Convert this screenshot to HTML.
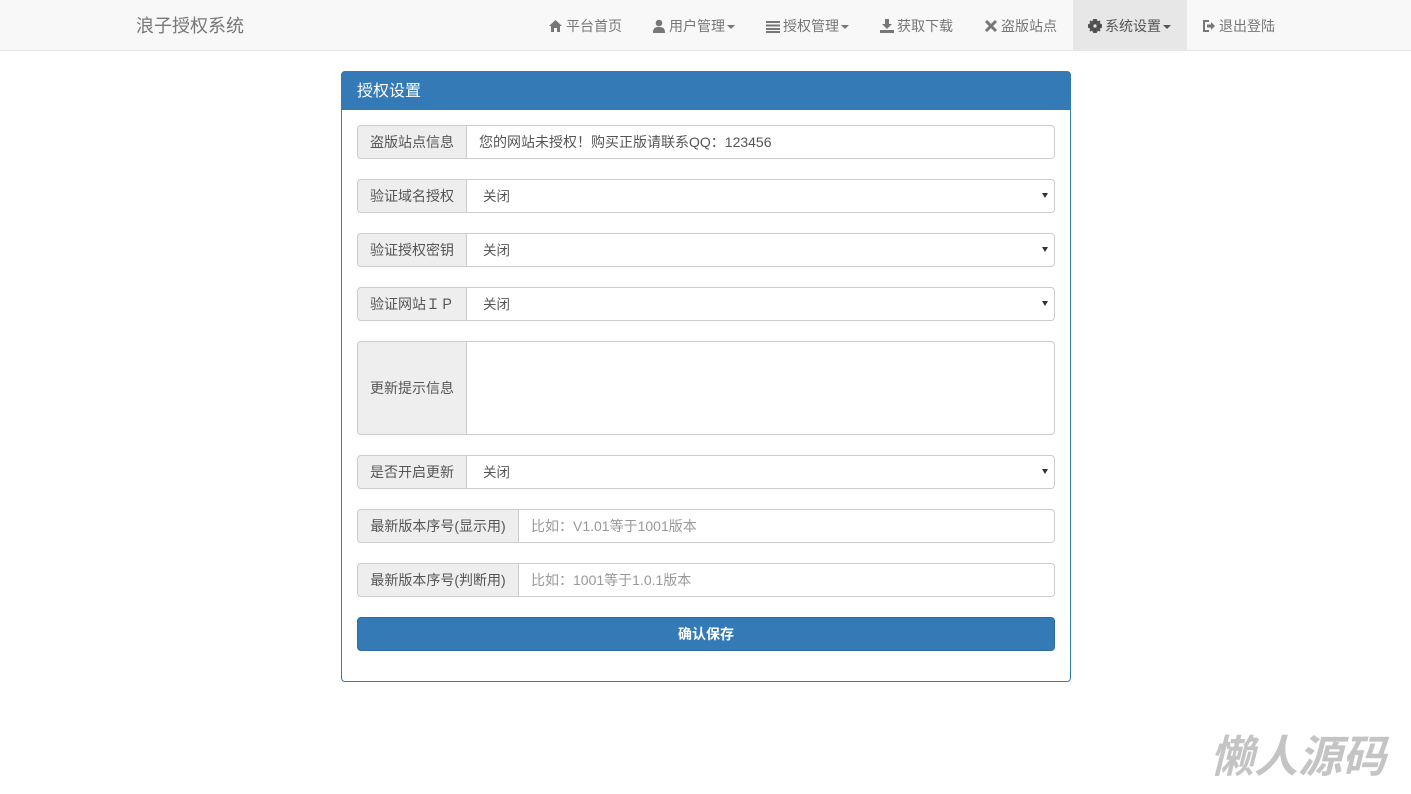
<!DOCTYPE html>
<html><head><meta charset="utf-8"><style>
*{box-sizing:border-box;margin:0;padding:0}
body{width:1411px;height:794px;background:#fff;font-family:"Liberation Sans","Noto Sans CJK SC",sans-serif;font-size:14px;color:#333;position:relative;overflow:hidden}
.nav{position:absolute;left:0;top:0;width:1411px;height:51px;background:#f8f8f8;border-bottom:1px solid #e7e7e7}
.brand{position:absolute;left:136px;top:15px;font-size:18px;color:#777;line-height:22px}
.li{position:absolute;top:0;height:50px;line-height:52px;color:#777;font-size:14px;white-space:nowrap;padding-left:15px}
.li.act{background:#e7e7e7}
.li svg{vertical-align:-2px;margin-right:3px}
.caret{display:inline-block;width:0;height:0;border-left:4px solid transparent;border-right:4px solid transparent;border-top:4px solid #777;vertical-align:middle;margin-left:2px}
.panel{position:absolute;left:341px;top:71px;width:730px;height:611px;border:1px solid #337ab7;border-radius:4px}
.ph{height:38px;background:#337ab7;color:#fff;font-size:16px;line-height:40px;padding-left:15px}
.g{position:absolute;left:15px;width:698px;height:34px;display:flex}
.ad{width:110px;background:#eee;border:1px solid #ccc;border-radius:4px 0 0 4px;color:#555;text-align:center;line-height:32px;font-size:14px;flex:none}
.in{flex:1;border:1px solid #ccc;border-left:none;border-radius:0 4px 4px 0;line-height:32px;padding-left:12px;color:#555;position:relative;font-size:14px}
.in.sel{padding-left:16px;font-size:13.5px;line-height:33px}
.ph2{color:#999}
.sel::after{content:"";position:absolute;right:6px;top:13px;border-left:3px solid transparent;border-right:3px solid transparent;border-top:5px solid #333}
.btn{position:absolute;left:15px;top:545px;width:698px;height:34px;background:#337ab7;border:1px solid #2e6da4;border-radius:4px;color:#fff;text-align:center;line-height:32px;font-size:14px;font-weight:bold}
.wm{position:absolute;left:1210px;top:731px;font-size:44px;font-weight:bold;font-style:italic;color:#c4c4c4;line-height:54px}
</style></head><body>
<div class="nav">
<div class="brand">浪子授权系统</div>
<div class="li" style="left:533px;width:104px"><svg width="15" height="14" viewBox="0 0 15 14"><path d="M7.5 1 L1 7 H3 V13 H6 V9 H9 V13 H12 V7 H14 Z" fill="#777"/></svg>平台首页</div>
<div class="li" style="left:637px;width:114px"><svg width="14" height="14" viewBox="0 0 14 14"><circle cx="7" cy="4" r="3.3" fill="#777"/><path d="M1 14 C1 9 3 8 7 8 C11 8 13 9 13 14Z" fill="#777"/></svg>用户管理<span class="caret"></span></div>
<div class="li" style="left:751px;width:114px"><svg width="14" height="14" viewBox="0 0 14 14"><rect x="0" y="2" width="14" height="2" fill="#777"/><rect x="0" y="5.5" width="14" height="2" fill="#777"/><rect x="0" y="9" width="14" height="2" fill="#777"/><rect x="0" y="12" width="14" height="2" fill="#777"/></svg>授权管理<span class="caret"></span></div>
<div class="li" style="left:865px;width:104px"><svg width="14" height="14" viewBox="0 0 14 14"><path d="M5 0H9V5H12L7 10L2 5H5Z M0 11H14V14H0Z" fill="#777"/></svg>获取下载</div>
<div class="li" style="left:969px;width:104px"><svg width="14" height="14" viewBox="0 0 14 14"><path d="M2 2L12 12M12 2L2 12" stroke="#777" stroke-width="3"/></svg>盗版站点</div>
<div class="li act" style="left:1073px;width:114px"><svg width="14" height="14" viewBox="0 0 14 14"><circle cx="7" cy="7" r="4.5" fill="none" stroke="#555" stroke-width="3"/><path d="M6 0H8V14H6ZM0 6H14V8H0Z M2 2L12 12M12 2L2 12" stroke="#555" stroke-width="1.8"/><circle cx="7" cy="7" r="1.6" fill="#e7e7e7"/></svg><span style="color:#555">系统设置</span><span class="caret" style="border-top-color:#555"></span></div>
<div class="li" style="left:1187px;width:104px"><svg width="14" height="14" viewBox="0 0 14 14"><path d="M7 2H2V12H7" fill="none" stroke="#777" stroke-width="2"/><path d="M5 5.5H9V3L13 7L9 11V8.5H5Z" fill="#777"/></svg>退出登陆</div>
</div>
<div class="panel">
<div class="ph">授权设置</div>
<div class="g" style="top:53px"><div class="ad">盗版站点信息</div><div class="in">您的网站未授权！购买正版请联系QQ：123456</div></div>
<div class="g" style="top:107px"><div class="ad">验证域名授权</div><div class="in sel">关闭</div></div>
<div class="g" style="top:161px"><div class="ad">验证授权密钥</div><div class="in sel">关闭</div></div>
<div class="g" style="top:215px"><div class="ad">验证网站ＩＰ</div><div class="in sel">关闭</div></div>
<div class="g" style="top:269px;height:94px"><div class="ad" style="line-height:92px">更新提示信息</div><div class="in"></div></div>
<div class="g" style="top:383px"><div class="ad">是否开启更新</div><div class="in sel">关闭</div></div>
<div class="g" style="top:437px"><div class="ad" style="width:162px">最新版本序号(显示用)</div><div class="in ph2">比如：V1.01等于1001版本</div></div>
<div class="g" style="top:491px"><div class="ad" style="width:162px">最新版本序号(判断用)</div><div class="in ph2">比如：1001等于1.0.1版本</div></div>
<div class="btn">确认保存</div>
</div>
<div class="wm">懒人源码</div>
</body></html>
